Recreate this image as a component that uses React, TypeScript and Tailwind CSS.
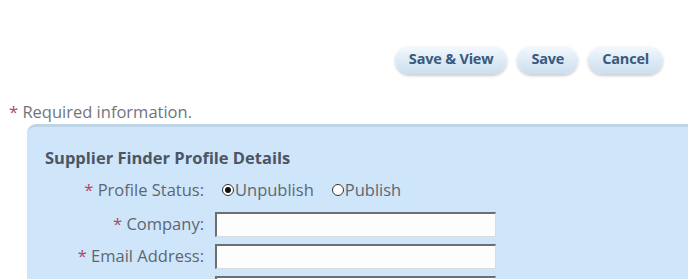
import React from "react";

const font = { fontFamily: '"Open Sans", "Noto Sans", sans-serif' };

function PillButton({ children }: { children: React.ReactNode }) {
  return (
    <button className="h-[29px] rounded-full px-[14px] text-[14.5px] font-bold text-[#3a5a7d] bg-gradient-to-b from-[#f6fafd] via-[#dfebf6] to-[#cbdff0] shadow-[0_2px_3px_rgba(0,0,0,0.2),inset_0_1px_0_rgba(255,255,255,0.9)] leading-none tracking-[-0.2px]">
      {children}
    </button>
  );
}

function Label({ children }: { children: React.ReactNode }) {
  return (
    <div className="w-[177px] shrink-0 text-right text-[16.5px] text-[#5d6671] leading-none whitespace-nowrap">
      <span className="text-[#b0465a]">* </span>
      {children}
    </div>
  );
}

function Input() {
  return (
    <div className="w-[281px] h-[25px] shrink-0 bg-[#fdfdfd] border-t-2 border-l-2 border-t-[#6b6e72] border-l-[#6b6e72] border-r border-b border-r-[#d8dcdf] border-b-[#d8dcdf]" />
  );
}

function Radio({ checked }: { checked?: boolean }) {
  return (
    <span className="inline-flex w-[12px] h-[12px] rounded-full border border-[#333] bg-white items-center justify-center mr-[1px]">
      {checked && <span className="w-[6px] h-[6px] rounded-full bg-[#111]" />}
    </span>
  );
}

export default function App() {
  return (
    <div className="w-[688px] h-[279px] overflow-hidden bg-white" style={font}>
      <div className="flex justify-end gap-[10px] pr-[25px] pt-[45px]">
        <PillButton>Save &amp; View</PillButton>
        <PillButton>Save</PillButton>
        <PillButton>Cancel</PillButton>
      </div>
      <div className="mt-[30px] pl-[9px] text-[16.5px] text-[#70757c] leading-none whitespace-nowrap">
        <span className="text-[#b0465a]">*</span> Required information.
      </div>
      <div className="ml-[27px] mt-[3px] h-[200px] rounded-tl-[9px] bg-[#cfe6fa] border-t-[3px] border-t-[#bdd3e6]">
        <div className="pl-[18px] pt-[23px] text-[16.5px] font-bold text-[#4b5563] leading-none whitespace-nowrap">
          Supplier Finder Profile Details
        </div>
        <div className="mt-[12px] flex flex-col gap-[7px]">
          <div className="flex items-center gap-[18px] h-[24px] mb-[3px]">
            <Label>Profile Status:</Label>
            <div className="flex items-center text-[16.5px] text-[#5d6671] leading-none whitespace-nowrap">
              <Radio checked />
              <span>Unpublish</span>
              <span className="ml-[18px]" />
              <Radio />
              <span>Publish</span>
            </div>
          </div>
          <div className="flex items-center gap-[11px]">
            <Label>Company:</Label>
            <Input />
          </div>
          <div className="flex items-center gap-[11px]">
            <Label>Email Address:</Label>
            <Input />
          </div>
          <div className="flex items-center gap-[11px]">
            <div className="w-[177px] shrink-0" />
            <Input />
          </div>
        </div>
      </div>
    </div>
  );
}
